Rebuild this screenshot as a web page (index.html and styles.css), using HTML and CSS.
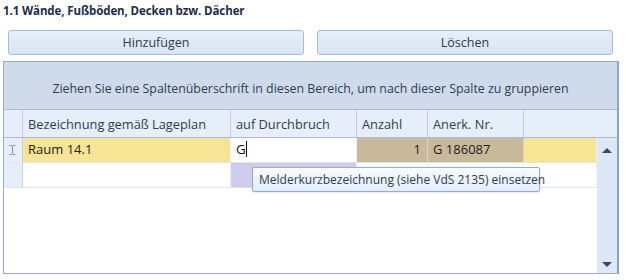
FILE: index.html
```html
<!DOCTYPE html>
<html>
<head>
<meta charset="utf-8">
<link rel="stylesheet" href="styles.css">
</head>
<body>
<div class="title">1.1 Wände, Fußböden, Decken bzw. Dächer</div>
<div class="buttons">
  <button class="btn">Hinzufügen</button>
  <button class="btn">Löschen</button>
</div>
<div class="grid">
  <div class="group-panel">Ziehen Sie eine Spaltenüberschrift in diesen Bereich, um nach dieser Spalte zu gruppieren</div>
  <div class="header">
    <div class="hcell ind"></div>
    <div class="hcell">Bezeichnung gemäß Lageplan</div>
    <div class="hcell">auf Durchbruch</div>
    <div class="hcell">Anzahl</div>
    <div class="hcell">Anerk. Nr.</div>
    <div class="hcell last"></div>
  </div>
  <div class="body">
    <div class="rows">
      <div class="row">
        <div class="cell ind"><svg width="7" height="10" viewBox="0 0 7 10"><path d="M0.5 0.5h2.5M4 0.5h2.5M3.5 1v8M0.5 9.5h2.5M4 9.5h2.5" stroke="#8a8f99" stroke-width="1" fill="none"/></svg></div>
        <div class="cell yellow">Raum 14.1</div>
        <div class="cell edit">G<span class="caret"></span></div>
        <div class="cell tan num">1</div>
        <div class="cell tan">G 186087</div>
        <div class="cell yellow"></div>
      </div>
      <div class="row">
        <div class="cell ind"></div>
        <div class="cell"></div>
        <div class="cell lav"></div>
        <div class="cell"></div>
        <div class="cell"></div>
        <div class="cell"></div>
      </div>
    </div>
    <div class="scrollbar">
      <span class="arrow up"></span>
      <span class="arrow down"></span>
    </div>
  </div>
  <div class="tooltip">Melderkurzbezeichnung (siehe VdS 2135) einsetzen</div>
</div>
</body>
</html>
```

FILE: styles.css
```css
* { box-sizing: border-box; }
body {
  margin: 0;
  background: #ffffff;
  font-family: "Open Sans", "Noto Sans", sans-serif;
  font-size: 12px;
  color: #1e2633;
}
.title {
  font-weight: bold;
  font-size: 11.5px;
  color: #1b2d4a;
  height: 30px;
  padding: 3px 0 0 3px;
  letter-spacing: -0.1px;
}
.buttons {
  display: grid;
  grid-template-columns: 296px 296px;
  column-gap: 13px;
  margin-left: 8px;
  height: 25px;
}
.btn {
  font-family: inherit;
  font-size: 12.5px;
  color: #2c3a4f;
  border: 1px solid #a6bbd6;
  border-radius: 3px;
  background: linear-gradient(#e6eef9, #d9e5f4);
  padding: 0;
}
.grid {
  position: relative;
  margin: 6px 0 0 3px;
  width: 616px;
  height: 213px;
  border: 1px solid #97acc9;
  border-right: 2px solid #8da3c3;
  display: flex;
  flex-direction: column;
}
.group-panel {
  height: 48px;
  background: #cfdbeb;
  border-bottom: 1px solid #a9bcd6;
  display: flex;
  align-items: center;
  justify-content: center;
  color: #2e3d55;
  font-size: 12.35px;
  padding-top: 6px;
}
.header, .row {
  display: grid;
  grid-template-columns: 19px 208px 126px 71px 96px 1fr;
}
.header {
  height: 28px;
  background: #e6eef9;
  border-bottom: 1px solid #a9bcd6;
}
.hcell {
  border-right: 1px solid #c3d1e4;
  padding: 5px 0 0 5px;
  color: #2e3d55;
  font-size: 12.8px;
  white-space: nowrap;
}
.hcell.last { border-right: none; }
.body {
  flex: 1;
  display: flex;
}
.rows {
  flex: 1;
}
.row {
  height: 25px;
  border-bottom: 1px solid #dfe5ee;
}
.cell {
  padding: 2px 0 0 5px;
  font-size: 13px;
  color: #1c1c1c;
  white-space: nowrap;
  border-right: 1px solid #eef1f5;
}
.cell.ind {
  background: #e6eef9;
  border-right: 1px solid #c3d1e4;
  padding: 7px 0 0 5px;
}
.cell.ind svg { display: block; }
.cell.yellow { background: #f7e494; }
.cell.tan { background: #c9b99b; border-right: 1px solid #ddd3c2; }
.cell.num { text-align: right; padding-right: 6px; }
.cell.edit { background: #ffffff; color: #111; font-size: 13.5px; padding-top: 2px; }
.cell.lav { background: #cecbeb; }
.caret {
  display: inline-block;
  width: 1px;
  height: 16px;
  background: #111;
  vertical-align: -3px;
}
.scrollbar {
  width: 20px;
  background: #dde8f6;
  display: flex;
  flex-direction: column;
  justify-content: space-between;
  align-items: center;
  padding: 10px 0 6px;
}
.arrow {
  width: 0;
  height: 0;
  border-left: 5px solid transparent;
  border-right: 5px solid transparent;
}
.arrow.up { border-bottom: 5px solid #3b4860; }
.arrow.down { border-top: 5px solid #3b4860; }
.tooltip {
  position: absolute;
  left: 248px;
  top: 105px;
  width: 288px;
  height: 25px;
  border: 1px solid #97acc9;
  border-radius: 2px;
  background: linear-gradient(#f8fbff, #e3ecf8);
  color: #2e3d55;
  font-size: 12px;
  padding: 3px 0 0 6px;
  box-shadow: 1px 1px 1px rgba(0,0,0,0.08);
  white-space: nowrap;
}
```
